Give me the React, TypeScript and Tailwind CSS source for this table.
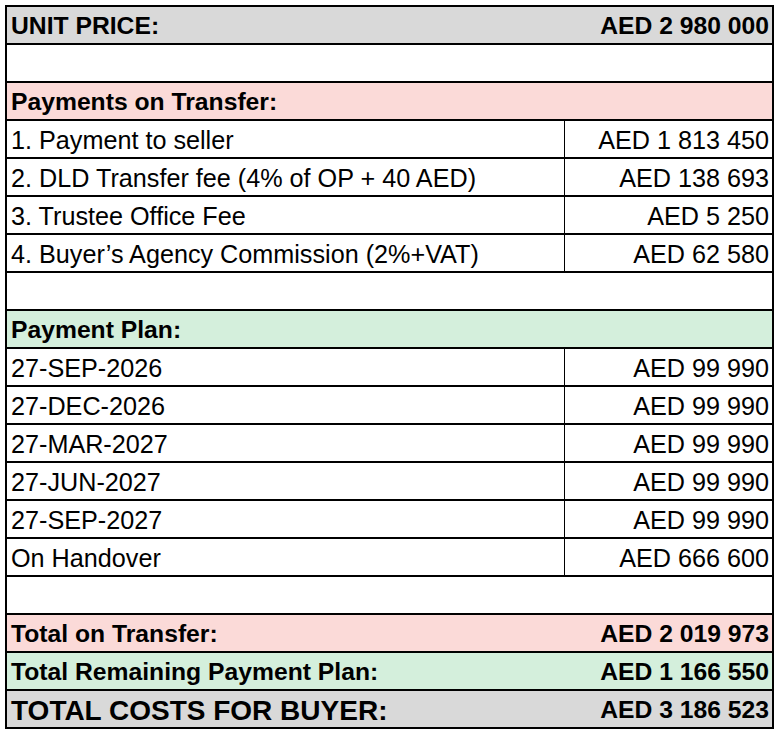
import React from 'react';

type Row =
  | { kind: 'head'; label: string; value?: string; bg: string; big?: boolean }
  | { kind: 'blank' }
  | { kind: 'item'; label: string; value: string };

const rows: Row[] = [
  { kind: 'head', label: 'UNIT PRICE:', value: 'AED 2 980 000', bg: 'bg-[#d9d9d9]' },
  { kind: 'blank' },
  { kind: 'head', label: 'Payments on Transfer:', bg: 'bg-[#fbdad8]' },
  { kind: 'item', label: '1. Payment to seller', value: 'AED 1 813 450' },
  { kind: 'item', label: '2. DLD Transfer fee (4% of OP + 40 AED)', value: 'AED 138 693' },
  { kind: 'item', label: '3. Trustee Office Fee', value: 'AED 5 250' },
  { kind: 'item', label: '4. Buyer\u2019s Agency Commission (2%+VAT)', value: 'AED 62 580' },
  { kind: 'blank' },
  { kind: 'head', label: 'Payment Plan:', bg: 'bg-[#d4efdc]' },
  { kind: 'item', label: '27-SEP-2026', value: 'AED 99 990' },
  { kind: 'item', label: '27-DEC-2026', value: 'AED 99 990' },
  { kind: 'item', label: '27-MAR-2027', value: 'AED 99 990' },
  { kind: 'item', label: '27-JUN-2027', value: 'AED 99 990' },
  { kind: 'item', label: '27-SEP-2027', value: 'AED 99 990' },
  { kind: 'item', label: 'On Handover', value: 'AED 666 600' },
  { kind: 'blank' },
  { kind: 'head', label: 'Total on Transfer:', value: 'AED 2 019 973', bg: 'bg-[#fbdad8]' },
  { kind: 'head', label: 'Total Remaining Payment Plan:', value: 'AED 1 166 550', bg: 'bg-[#d4efdc]' },
  { kind: 'head', label: 'TOTAL COSTS FOR BUYER:', value: 'AED 3 186 523', bg: 'bg-[#d9d9d9]', big: true },
];

export default function App() {
  return (
    <div className="min-h-[735px] bg-white pl-[5px] pt-[5px] text-black" style={{ fontFamily: '"Liberation Sans", Arial, sans-serif' }}>
      <div className="w-[769px] border-t-2 border-l-2 border-r-2 border-black">
        {rows.map((row, i) => {
          if (row.kind === 'blank') {
            return <div key={i} className="h-[38px] border-b-2 border-black" />;
          }
          if (row.kind === 'head') {
            return (
              <div
                key={i}
                className={`h-[38px] border-b-2 border-black flex items-center justify-between pl-[4px] pr-[3px] pt-[3px] font-bold leading-none ${row.bg} ${row.big ? 'text-[28px]' : 'text-[24.7px]'}`}
              >
                <span>{row.label}</span>
                {row.value && <span className="text-[24.7px]">{row.value}</span>}
              </div>
            );
          }
          return (
            <div key={i} className="h-[38px] border-b-2 border-black flex text-[25.2px] leading-none">
              <div className="w-[558px] border-r-[1.5px] border-black flex items-center pl-[4px] pt-[3px]">{row.label}</div>
              <div className="flex-1 flex items-center justify-end pr-[3px] pt-[3px]">{row.value}</div>
            </div>
          );
        })}
      </div>
    </div>
  );
}
